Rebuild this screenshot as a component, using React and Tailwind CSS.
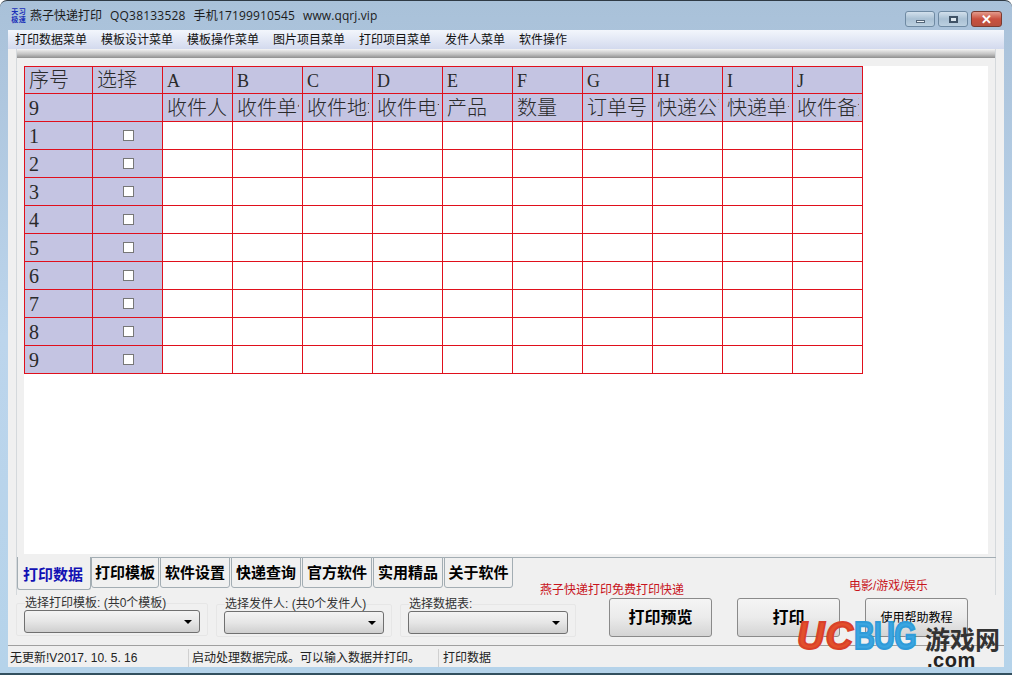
const CJK = '"Liberation Sans", "Noto Sans CJK SC", sans-serif';

function WinBtn({ wide, red, children }) {
  return (
    <div className={`h-[16px] ${wide ? "w-[31px]" : "w-[30px]"} rounded-[3px] border flex items-center justify-center ${red ? "border-[#7a3b30] bg-gradient-to-b from-[#e39a8c] via-[#c9503f] to-[#b8503e]" : "border-[#6f8aa3] bg-gradient-to-b from-[#d2e0ec] via-[#a9c0d4] to-[#bcd0e0]"}`}>
      {children}
    </div>
  );
}

function Tab({ children, w }) {
  return (
    <div className={`${w} h-[31px] -mt-px mr-px border border-[#a3adb3] rounded-b-[3px] bg-[#f0f0f0] flex items-center justify-center pt-[2px] text-[15px] font-bold text-black`}>
      {children}
    </div>
  );
}

function Group({ label, dd, cls, inner }) {
  return (
    <fieldset className={`${cls} h-[39px] border border-[#e6e6e6] rounded-[2px] px-[7px] m-0 min-w-0`}>
      <legend className="ml-[1px] px-0 text-[12px] leading-[12px] text-[#333] whitespace-pre">{label}</legend>
      <div className={`${dd} ${inner} h-[23px] border border-[#707070] rounded-[3px] bg-gradient-to-b from-[#f4f4f4] via-[#e6e6e6] to-[#cfcfcf] flex items-center justify-end pr-[7px]`}>
        <div className="w-0 h-0 border-x-[4px] border-x-transparent border-t-[4px] border-t-black" />
      </div>
    </fieldset>
  );
}

function Btn({ children, cls, ml }) {
  return (
    <div className={`w-[103px] h-[39px] ${ml} border border-[#8a8a8a] rounded-[3px] bg-gradient-to-b from-[#f4f4f4] via-[#ebebeb] to-[#d4d4d4] flex items-center justify-center text-black ${cls}`}>
      {children}
    </div>
  );
}

const letters = ["A", "B", "C", "D", "E", "F", "G", "H", "I", "J"];
const second = ["收件人", "收件单位", "收件地址", "收件电话", "产品", "数量", "订单号", "快递公司", "快递单号", "收件备注"];
const serif = { fontFamily: '"Liberation Serif", "Noto Sans CJK SC", serif' };
const open = { fontFamily: '"Open Sans", "Noto Sans CJK SC", sans-serif' };

function Cell({ children, head, h }) {
  return (
    <td className={`border border-[#e0101c] ${head ? "bg-[#c4c4e2]" : "bg-white"} ${h} p-0 pl-[4px] overflow-hidden whitespace-nowrap text-[#2a2a2a] text-[20px] font-light leading-none`}>
      {children}
    </td>
  );
}

export default function App() {
  return (
    <div className="w-[1012px] h-[675px] overflow-hidden flex flex-col bg-gradient-to-b from-[#a9c1d9] via-[#bcd5ec] to-[#b5d3ea] rounded-t-[7px] border-t border-[#2f3a44] border-b-2 border-b-[#33505f]" style={{ fontFamily: CJK }}>
      <div className="h-[29px] shrink-0 flex items-center pl-[11px] pr-[10px]">
        <div className="w-[15px] h-[16px] grid grid-cols-2 text-[7px] leading-[8px] font-bold text-[#1a2fb8] text-center mr-[4px]">
          <span>天</span><span>习</span><span>极</span><span>速</span>
        </div>
        <span className="text-[12px] text-[#1b1b1b] whitespace-pre">燕子快递打印</span>
        <span className="text-[12px] text-[#1b1b1b] ml-[8px] whitespace-pre tracking-[0.2px]" style={open}>QQ38133528</span>
        <span className="text-[12px] text-[#1b1b1b] ml-[8px] whitespace-pre tracking-[0.15px]" style={open}>手机17199910545</span>
        <span className="text-[12px] text-[#1b1b1b] ml-[8px] whitespace-pre tracking-[0.1px]" style={open}>www.qqrj.vip</span>
        <div className="ml-auto flex gap-[3px] self-start mt-[10px]">
          <WinBtn><div className="w-[9px] h-[3px] mt-[5px] bg-[#eef3f7] border border-[#55677a]" /></WinBtn>
          <WinBtn><div className="w-[9px] h-[7px] border-2 border-[#3f5266] bg-[#dde7ef]" /></WinBtn>
          <WinBtn wide red><span className="text-white font-bold text-[13px] leading-none">✕</span></WinBtn>
        </div>
      </div>

      <div className="flex-1 min-h-0 mx-[8px] bg-[#f0f0f0] flex flex-col">
        <div className="h-[19px] shrink-0 bg-gradient-to-b from-[#f3f6fc] to-[#d3daee] flex items-center pl-[7px] gap-[14px] text-[12px] text-[#111]">
          <span>打印数据菜单</span>
          <span>模板设计菜单</span>
          <span>模板操作菜单</span>
          <span>图片项目菜单</span>
          <span>打印项目菜单</span>
          <span>发件人菜单</span>
          <span>软件操作</span>
        </div>

        <div className="flex-1 min-h-0 mx-[8px] flex flex-col border-x border-[#d5d9dc]">
          <div className="h-[8px] shrink-0 mt-px bg-gradient-to-b from-[#e9e9e9] via-[#c4c4c4] to-[#8f8f8f]" />
          <div className="flex-1 min-h-0 mx-[7px] mt-[8px] bg-white">
            <table className="border-collapse table-fixed w-[839px]" style={serif}>
              <colgroup>
                <col className="w-[68px]" />
                <col className="w-[70px]" />
                {letters.map((l) => <col key={l} className="w-[70px]" />)}
              </colgroup>
              <tbody>
                <tr>
                  <Cell head h="h-[27px]">序号</Cell>
                  <Cell head h="h-[27px]">选择</Cell>
                  {letters.map((l) => <Cell key={l} head h="h-[27px]"><span className="text-[18px]">{l}</span></Cell>)}
                </tr>
                <tr>
                  <Cell head h="h-[28px]">9</Cell>
                  <Cell head h="h-[28px]"></Cell>
                  {second.map((s) => (
                    <Cell key={s} head h="h-[28px]">
                      <div className="w-[62px] overflow-hidden">{s}</div>
                    </Cell>
                  ))}
                </tr>
                {[1, 2, 3, 4, 5, 6, 7, 8, 9].map((n) => (
                  <tr key={n}>
                    <Cell head h="h-[28px]">{n}</Cell>
                    <td className="border border-[#e0101c] bg-[#c4c4e2] p-0 pl-[2px]">
                      <div className="w-[11px] h-[11px] mx-auto bg-white border border-[#777]" />
                    </td>
                    {letters.map((l) => <Cell key={l} h="h-[28px]"></Cell>)}
                  </tr>
                ))}
              </tbody>
            </table>
          </div>
          <div className="h-[3px] shrink-0" />
          <div className="h-[38px] shrink-0 flex border-t border-[#a3adb3] -mr-px">
            <div className="w-[74px] h-[33px] -mt-px border border-t-0 border-[#a3adb3] rounded-b-[3px] bg-[#f0f0f0] flex items-center justify-center pr-[2px] pt-[4px] text-[15px] font-bold text-[#1212b4]">打印数据</div>
            <Tab w="w-[68px]">打印模板</Tab>
            <Tab w="w-[70px]">软件设置</Tab>
            <Tab w="w-[70px]">快递查询</Tab>
            <Tab w="w-[70px]">官方软件</Tab>
            <Tab w="w-[70px]">实用精品</Tab>
            <Tab w="w-[69px]">关于软件</Tab>
            <span className="ml-[26px] mt-[25px] text-[12px] leading-[14px] text-[#c8141c] whitespace-nowrap">燕子快递打印免费打印快递</span>
            <span className="ml-[165px] mt-[21px] text-[12px] leading-[14px] text-[#c8141c] whitespace-nowrap">电影/游戏/娱乐</span>
          </div>
        </div>

        <div className="h-[50px] shrink-0 flex pl-[8px] items-start">
          <Group label="选择打印模板: (共0个模板)" dd="w-[176px]" inner="mt-[1px]" cls="w-[192px] mr-[8px] mt-[2px]" />
          <Group label="选择发件人: (共0个发件人)" dd="w-[160px]" inner="mt-[1px]" cls="w-[176px] mr-[8px] mt-[3px]" />
          <Group label="选择数据表:" dd="w-[160px]" inner="mt-[1px]" cls="w-[176px] mt-[3px]" />
          <div className="flex mt-[3px] ml-[33px]">
            <Btn cls="text-[16px] font-bold">打印预览</Btn>
            <Btn ml="ml-[25px]" cls="text-[16px] font-bold">打印</Btn>
            <Btn ml="ml-[25px]" cls="text-[12px]">使用帮助教程</Btn>
          </div>
        </div>

        <div className="h-[22px] shrink-0 border-t border-[#a0a0a0] flex items-center pt-[2px] text-[12px] text-[#222]">
          <div className="w-[180px] pl-[2px] whitespace-pre">无更新!V2017. 10. 5. 16</div>
          <div className="w-[250px] border-l border-[#d0d0d0] pl-[3px] whitespace-nowrap">启动处理数据完成。可以输入数据并打印。</div>
          <div className="border-l border-[#d0d0d0] pl-[4px]">打印数据</div>
        </div>
      </div>
      <div className="h-[6px] shrink-0" />

      <div className="absolute left-[797px] top-[617px] flex items-baseline pointer-events-none whitespace-nowrap" style={{ fontFamily: '"Liberation Sans", sans-serif' }}>
        <span className="text-[38px] leading-[38px] font-bold italic text-[#e2502c] [-webkit-text-stroke:2px_#d9402a] tracking-[1px]">UC</span>
        <span className="text-[38px] leading-[38px] font-bold text-[#3aa5e0] [-webkit-text-stroke:2px_#2f9bd9] tracking-[-1px] origin-left scale-x-[0.76]">BUG</span>
      </div>
      <div className="absolute left-[925px] top-[630px] text-[25px] leading-[22px] font-bold text-[#333] whitespace-nowrap pointer-events-none" style={serif}>游戏网</div>
      <div className="absolute left-[927px] top-[652px] text-[20px] leading-[16px] font-bold text-[#222] pointer-events-none tracking-[0.5px]" style={{ fontFamily: '"Liberation Sans", sans-serif' }}>.com</div>
    </div>
  );
}
